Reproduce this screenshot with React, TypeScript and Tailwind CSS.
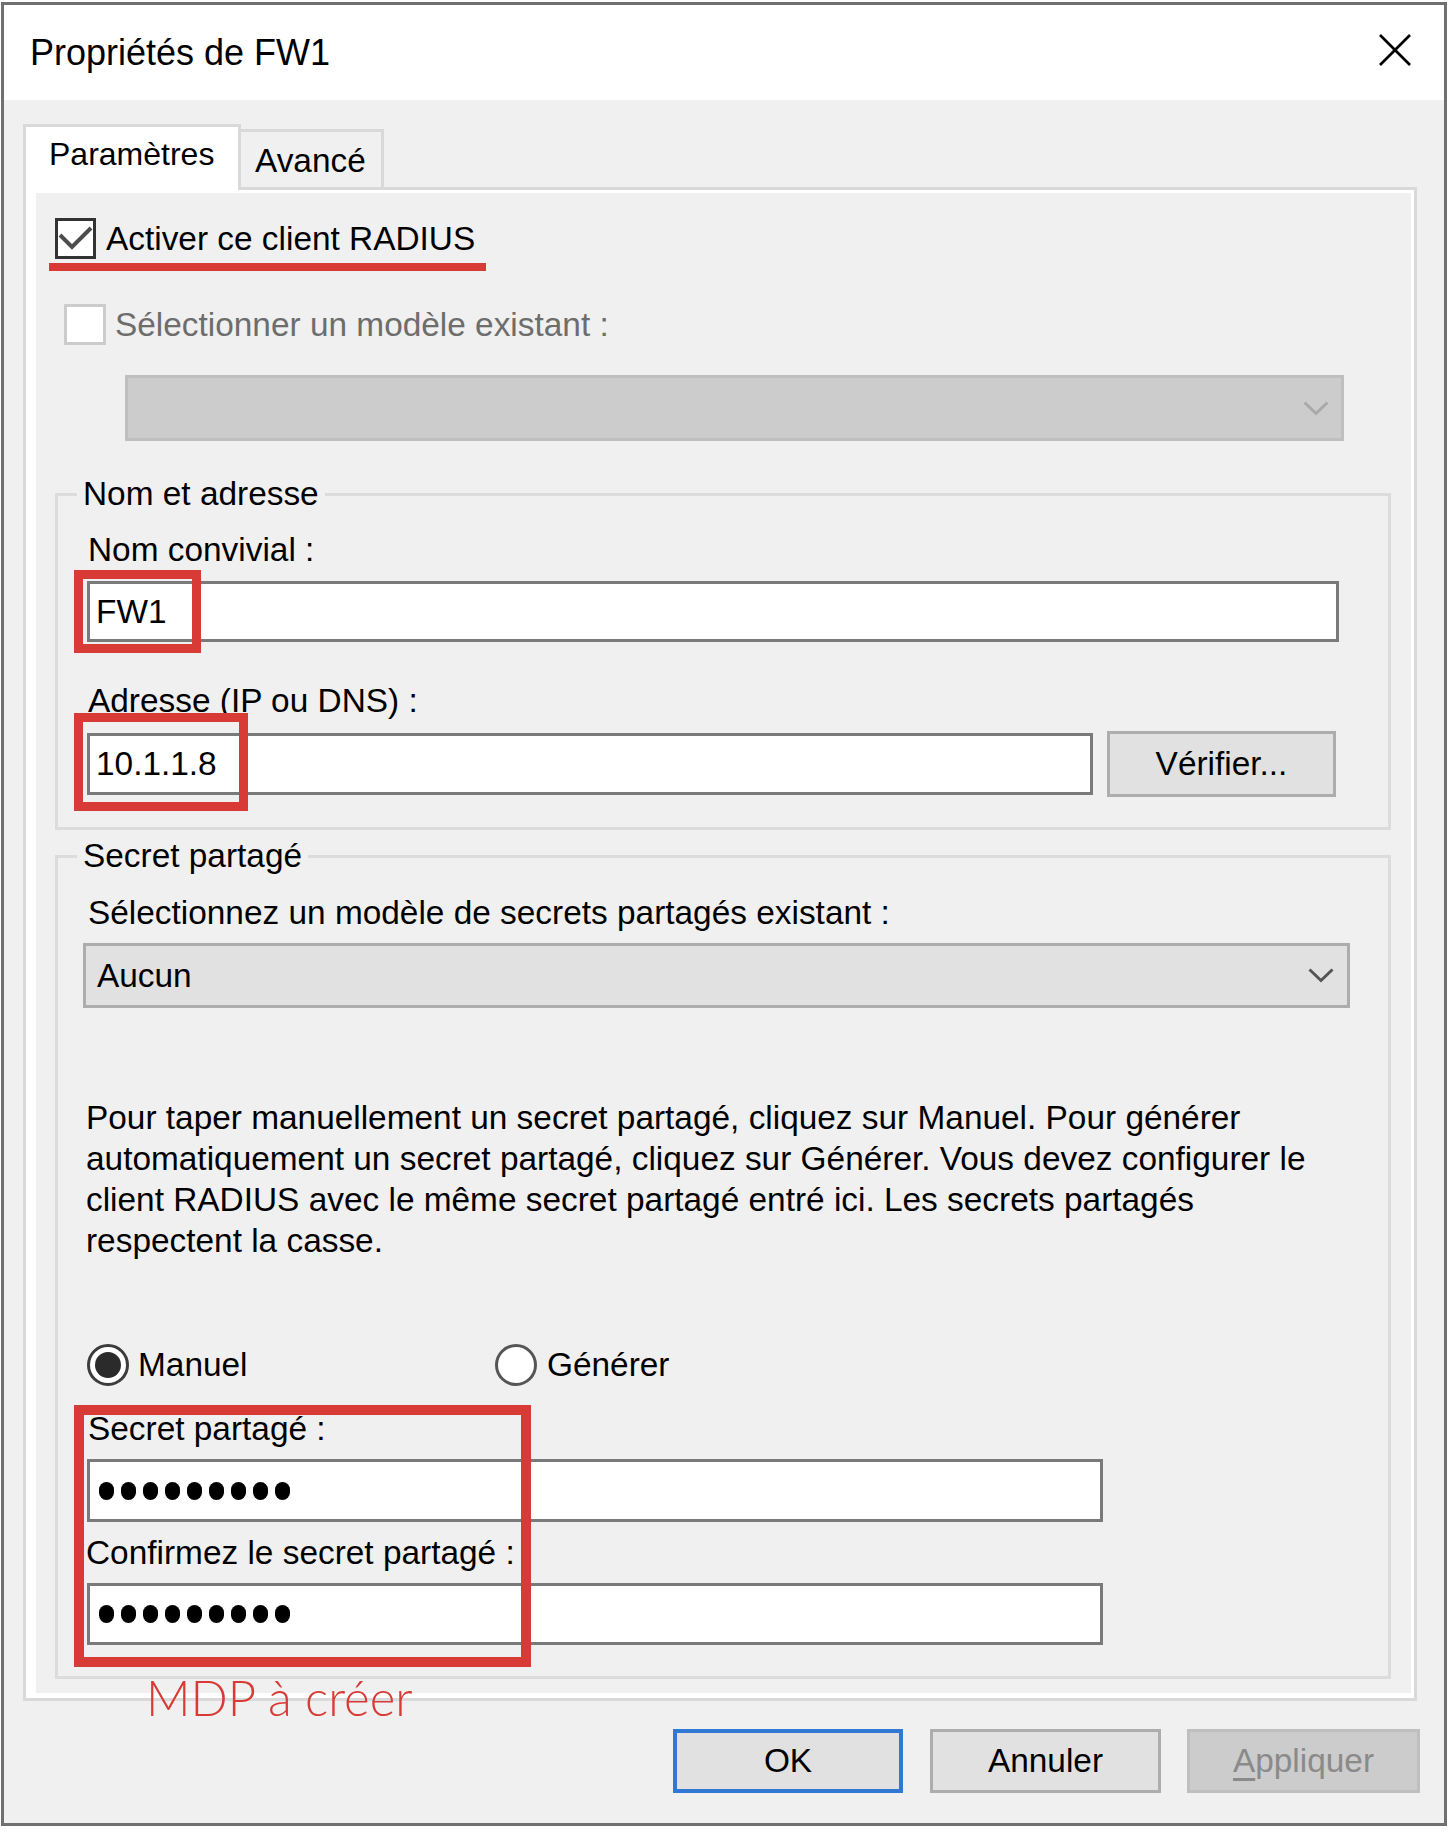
import React from 'react';

const RED = 'border-[#d83b36]';

const Chevron = ({ color }: { color: string }) => (
  <svg width="26" height="15" viewBox="0 0 26 15" fill="none">
    <polyline points="1.5,1.5 13,12.5 24.5,1.5" stroke={color} strokeWidth="3" />
  </svg>
);

const Dots = () => (
  <div className="flex gap-[7px] pl-[3px]">
    {Array.from({ length: 9 }).map((_, i) => (
      <span key={i} className="w-[15px] h-[18px] rounded-full bg-black" />
    ))}
  </div>
);

const App: React.FC = () => {
  return (
    <div className="w-[1454px] h-[1832px] bg-white pt-[2px] pl-[1px] font-['Liberation_Sans',Arial,sans-serif] text-[33.4px] leading-[40px] text-black">
      <div className="w-[1446px] h-[1824px] border-[3px] border-[#707070] flex flex-col">
        {/* Title bar */}
        <div className="h-[95px] bg-white flex items-center justify-between pl-[26px] pr-[33px]">
          <span className="text-[36px]">Propriétés de FW1</span>
          <svg width="32" height="32" viewBox="0 0 32 32" className="mb-[6px]">
            <line x1="1" y1="1" x2="31" y2="31" stroke="#000" strokeWidth="2.6" />
            <line x1="31" y1="1" x2="1" y2="31" stroke="#000" strokeWidth="2.6" />
          </svg>
        </div>

        {/* Body */}
        <div className="flex-1 bg-[#f0f0f0] pt-[24px] pl-[19px] pr-[24px] flex flex-col">
          {/* Tabs */}
          <div className="flex items-end h-[63px]">
            <div className="relative z-10 w-[218px] h-[66px] -mb-[3px] bg-white border-[3px] border-b-0 border-[#d9d9d9] pt-[7px] pl-[23px] text-[32px]">
              Paramètres
            </div>
            <div className="w-[143px] h-[58px] bg-[#f0f0f0] border-[3px] border-l-0 border-b-0 border-[#d9d9d9] pt-[9px] pl-[14px]">
              Avancé
            </div>
          </div>

          {/* Panel */}
          <div className="w-[1394px] border-[3px] border-[#d9d9d9]">
            <div className="border-l-[10px] border-t-[3px] border-r-[3px] border-b-[5px] border-white pb-[14px] flex flex-col">
              {/* Activer */}
              <div className="mt-[25px] ml-[19px] h-[41px] flex items-center">
                <div className="w-[41px] h-[41px] border-[3px] border-[#333333] bg-white">
                  <svg width="35" height="35" viewBox="0 0 35 35">
                    <polyline points="2,14 14,26 33,7" fill="none" stroke="#4d4d4d" strokeWidth="4" />
                  </svg>
                </div>
                <span className="ml-[10px]">Activer ce client RADIUS</span>
              </div>
              <div className="mt-[4px] ml-[13px] w-[437px] h-[8px] bg-[#d83b36]" />

              {/* Modèle existant */}
              <div className="mt-[33px] ml-[28px] h-[41px] flex items-center">
                <div className="w-[42px] h-[41px] border-[3px] border-[#cccccc] bg-white" />
                <span className="ml-[9px] text-[#6d6d6d]">Sélectionner un modèle existant :</span>
              </div>
              <div className="mt-[30px] ml-[89px] w-[1219px] h-[66px] bg-[#cccccc] border-[3px] border-[#bfbfbf] flex items-center justify-end pr-[12px]">
                <Chevron color="#a9a9a9" />
              </div>

              {/* Nom et adresse */}
              <fieldset className="mt-[33px] ml-[19px] w-[1336px] m-0 p-0 pb-[30px] border-[3px] border-[#dcdcdc]">
                <legend className="ml-[19px] px-[6px] p-0 leading-[40px]">Nom et adresse</legend>
                <div className="mt-[16px] ml-[30px]">Nom convivial :</div>
                <div className="relative mt-[11px] ml-[29px] w-[1252px]">
                  <div className="h-[61px] bg-white border-[3px] border-[#7a7a7a] flex items-center pl-[6px]">FW1</div>
                  <div className={`absolute left-[-13px] top-[-11px] w-[127px] h-[83px] border-[9px] ${RED}`} />
                </div>
                <div className="mt-[39px] ml-[30px]">Adresse (IP ou DNS) :</div>
                <div className="relative mt-[10px] ml-[29px] h-[66px] flex items-center gap-[14px]">
                  <div className="w-[1006px] h-[62px] bg-white border-[3px] border-[#7a7a7a] flex items-center pl-[6px]">10.1.1.8</div>
                  <div className="w-[229px] h-[66px] bg-[#e1e1e1] border-[3px] border-[#adadad] flex items-center justify-center">
                    Vérifier...
                  </div>
                  <div className={`absolute left-[-13px] top-[-18px] w-[174px] h-[98px] border-[9px] ${RED}`} />
                </div>
              </fieldset>

              {/* Secret partagé */}
              <fieldset className="mt-[6px] ml-[19px] w-[1336px] m-0 p-0 pb-[31px] border-[3px] border-[#dcdcdc]">
                <legend className="ml-[19px] px-[6px] p-0 leading-[40px]">Secret partagé</legend>
                <div className="mt-[17px] ml-[30px]">Sélectionnez un modèle de secrets partagés existant :</div>
                <div className="mt-[10px] ml-[25px] w-[1267px] h-[65px] bg-[#e1e1e1] border-[3px] border-[#adadad] flex items-center justify-between pl-[11px] pr-[13px]">
                  <span>Aucun</span>
                  <Chevron color="#555555" />
                </div>
                <p className="mt-[89px] ml-[28px] leading-[41px] whitespace-nowrap">
                  Pour taper manuellement un secret partagé, cliquez sur Manuel. Pour générer
                  <br />
                  automatiquement un secret partagé, cliquez sur Générer. Vous devez configurer le
                  <br />
                  client RADIUS avec le même secret partagé entré ici. Les secrets partagés
                  <br />
                  respectent la casse.
                </p>

                <div className="mt-[83px] ml-[29px] h-[42px] flex">
                  <div className="w-[408px] flex items-center gap-[9px]">
                    <div className="w-[42px] h-[42px] rounded-full border-[3px] border-[#3c3c3c] bg-white flex items-center justify-center">
                      <div className="w-[26px] h-[26px] rounded-full bg-[#2b2b2b]" />
                    </div>
                    <span>Manuel</span>
                  </div>
                  <div className="flex items-center gap-[10px]">
                    <div className="w-[42px] h-[42px] rounded-full border-[3px] border-[#555555] bg-white" />
                    <span>Générer</span>
                  </div>
                </div>

                <div className="relative mt-[23px]">
                  <div className="ml-[30px]">Secret partagé :</div>
                  <div className="mt-[10px] ml-[29px] w-[1016px] h-[63px] bg-white border-[3px] border-[#7a7a7a] flex items-center pl-[6px]">
                    <Dots />
                  </div>
                  <div className="mt-[11px] ml-[28px]">Confirmez le secret partagé :</div>
                  <div className="mt-[10px] ml-[29px] w-[1016px] h-[62px] bg-white border-[3px] border-[#7a7a7a] flex items-center pl-[6px]">
                    <Dots />
                  </div>
                  <div className={`absolute left-[16px] top-[-4px] w-[457px] h-[262px] border-[10px] ${RED}`} />
                  <span className="absolute left-[88px] top-[264px] font-['Lato',sans-serif] font-light text-[49px] leading-none text-[#d83b36] whitespace-nowrap">
                    MDP à créer
                  </span>
                </div>
              </fieldset>
            </div>
          </div>

          {/* Buttons */}
          <div className="mt-[28px] flex justify-end">
            <div className="w-[230px] h-[64px] bg-[#e1e1e1] border-[4px] border-[#3178d4] flex items-center justify-center">OK</div>
            <div className="ml-[27px] w-[231px] h-[64px] bg-[#e1e1e1] border-[3px] border-[#adadad] flex items-center justify-center">Annuler</div>
            <div className="ml-[26px] w-[233px] h-[64px] bg-[#cccccc] border-[3px] border-[#bfbfbf] flex items-center justify-center text-[#8a8a8a]">
              <span><span className="underline underline-offset-[6px]">A</span>ppliquer</span>
            </div>
          </div>
        </div>
      </div>
    </div>
  );
};

export default App;
